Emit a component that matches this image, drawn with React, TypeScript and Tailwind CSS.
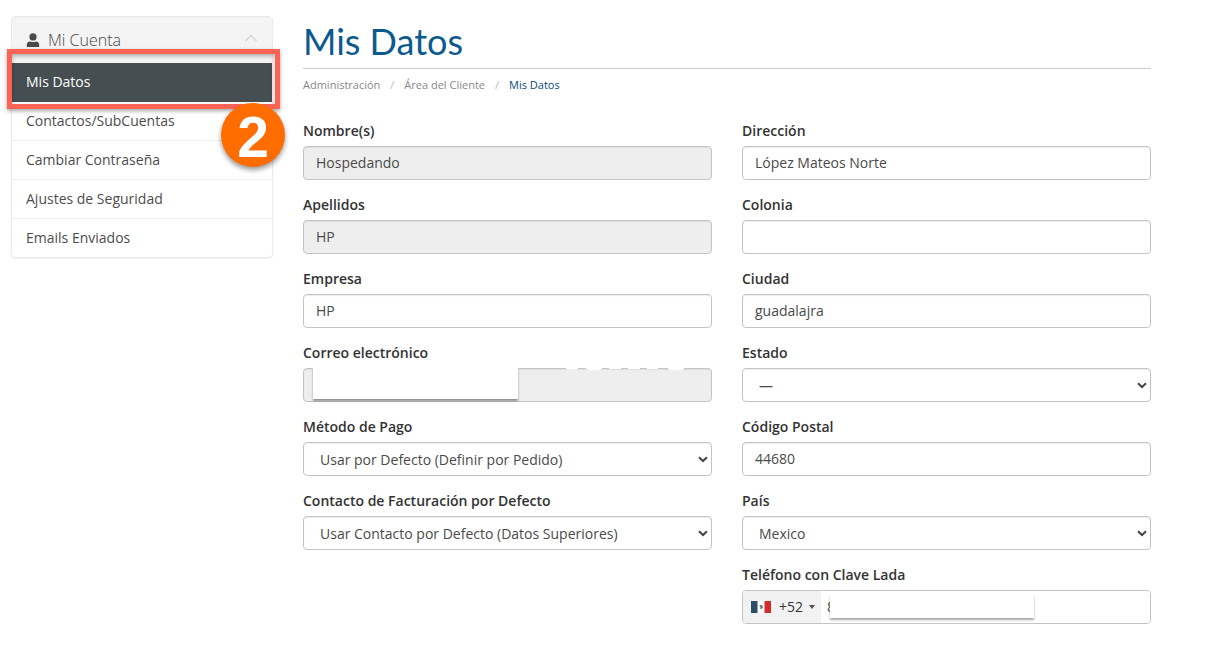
import React from 'react';

const menuItems = [
  'Mis Datos',
  'Contactos/SubCuentas',
  'Cambiar Contraseña',
  'Ajustes de Seguridad',
  'Emails Enviados',
];

const controlClass =
  'block h-[34px] w-full rounded border border-[#c4c4c4] px-3 text-sm text-[#4a4a4a] shadow-[inset_0_1px_1px_rgba(0,0,0,0.07)] outline-none';

function Field({ id, label, children }: { id: string; label: string; children: React.ReactNode }) {
  return (
    <div className="mb-[15px]">
      <label htmlFor={id} className="mb-[5px] block text-sm leading-5 font-semibold text-[#333]">
        {label}
      </label>
      {children}
    </div>
  );
}

function TextField({ id, label, value, locked }: { id: string; label: string; value: string; locked?: boolean }) {
  return (
    <Field id={id} label={label}>
      <input
        id={id}
        type="text"
        defaultValue={value}
        disabled={locked}
        className={`${controlClass} pb-0.5 ${locked ? 'bg-[#eee]' : 'bg-white'}`}
      />
    </Field>
  );
}

function SelectField({ id, label, value }: { id: string; label: string; value: string }) {
  return (
    <Field id={id} label={label}>
      <div className="relative">
        <select id={id} defaultValue={value} className={`${controlClass} appearance-none bg-white pt-0.5 pr-8 pl-4`}>
          <option>{value}</option>
        </select>
        <svg
          className="pointer-events-none absolute top-3.5 right-1 h-2 w-2.5"
          viewBox="0 0 10 8"
          fill="none"
          stroke="#444"
          strokeWidth="2"
          aria-hidden="true"
        >
          <path d="M1 1.2 L5 5 L9 1.2" />
        </svg>
      </div>
    </Field>
  );
}

function Sidebar() {
  return (
    <aside className="relative w-[262px] shrink-0">
      <div className="rounded border border-[#e9e9e9] bg-white shadow-[0_1px_1px_rgba(0,0,0,0.05)]">
        <h2 className="flex h-[46px] items-center bg-[#f4f4f4] px-3.5 text-base font-light text-[#444]">
          <svg className="mr-2 h-3.5 w-3.5" viewBox="0 0 14 14" fill="#4a4a4a" aria-hidden="true">
            <circle cx="7" cy="3.9" r="3.6" />
            <path d="M0.8 14 V11.8 Q0.8 8.6 4 8.4 Q7 9.6 10 8.4 Q13.2 8.6 13.2 11.8 V14 Z" />
          </svg>
          Mi Cuenta
          <svg className="mb-1 ml-auto h-2 w-3.5" viewBox="0 0 14 8" fill="none" stroke="#d5d5d5" strokeWidth="1.3" aria-hidden="true">
            <path d="M1.5 7 L7 1.5 L12.5 7" />
          </svg>
        </h2>
        <nav>
          {menuItems.map((item, index) => (
            <a
              key={item}
              href="#"
              className={`flex h-[39px] items-center border-b px-3.5 text-sm last:h-[38px] last:border-b-0 ${
                index === 0 ? 'border-[#454f51] bg-[#454f51] text-white' : 'border-[#eee] text-[#4d4d4d]'
              }`}
            >
              {item}
            </a>
          ))}
        </nav>
      </div>
      <div className="pointer-events-none absolute top-[33px] -right-[7px] -left-1 h-[60px] border-[5px] border-[#fb6455] shadow-[0_2px_4px_rgba(0,0,0,0.35),inset_0_2px_4px_rgba(0,0,0,0.3)]" />
      <div className="absolute top-[87px] -right-3 flex h-16 w-16 items-center justify-center rounded-full bg-[#ff6c00] pt-1 font-['Liberation_Sans',sans-serif] text-[57px] leading-none font-bold text-white shadow-[0_3px_5px_rgba(0,0,0,0.4)]">
        2
      </div>
    </aside>
  );
}

export default function App() {
  return (
    <div className="flex items-start gap-[30px] pt-4 pr-[61px] pb-4 pl-[11px] font-['Open_Sans',sans-serif] text-[#4a4a4a]">
      <Sidebar />
      <main className="min-w-0 grow">
        <h1 className="h-[53px] border-b border-[#ccc] font-['Lato',sans-serif] text-4xl leading-[50px] text-[#0b5a8f]">
          Mis Datos
        </h1>
        <nav aria-label="Ruta" className="flex items-center pt-2 pb-7 text-[11px] leading-4 text-[#888]">
          <a href="#">Administración</a>
          <span className="w-6 text-center text-[#bbb]">/</span>
          <a href="#">Área del Cliente</a>
          <span className="w-6 text-center text-[#bbb]">/</span>
          <span className="text-[#0a4a78]">Mis Datos</span>
        </nav>
        <form className="grid grid-cols-2 gap-x-[30px]">
          <div>
            <TextField id="nombre" label="Nombre(s)" value="Hospedando" locked />
            <TextField id="apellidos" label="Apellidos" value="HP" locked />
            <TextField id="empresa" label="Empresa" value="HP" />
            <Field id="correo" label="Correo electrónico">
              <div className="relative">
                <input id="correo" type="email" disabled className={`${controlClass} bg-[#eee]`} />
                <div className="absolute top-0 left-2.5 h-[31px] w-[205px] bg-white shadow-[0_2px_2px_rgba(0,0,0,0.4)]" />
                <svg className="absolute top-0 right-[26px] h-1 w-[120px]" viewBox="0 0 120 4" fill="#fff" aria-hidden="true">
                  <path d="M0 0 H12 V1 Q6 2 0 1 Z M20 0 H36 V1 Q28 4 20 1 Z M43 0 H55 V1 H43 Z M62 0 H74 V1 H62 Z M81 0 H92 V1 H81 Z M102 0 H118 V1 Q110 4 102 1 Z" />
                </svg>
              </div>
            </Field>
            <SelectField id="pago" label="Método de Pago" value="Usar por Defecto (Definir por Pedido)" />
            <SelectField
              id="facturacion"
              label="Contacto de Facturación por Defecto"
              value="Usar Contacto por Defecto (Datos Superiores)"
            />
          </div>
          <div>
            <TextField id="direccion" label="Dirección" value="López Mateos Norte" />
            <TextField id="colonia" label="Colonia" value="" />
            <TextField id="ciudad" label="Ciudad" value="guadalajra" />
            <SelectField id="estado" label="Estado" value="—" />
            <TextField id="postal" label="Código Postal" value="44680" />
            <SelectField id="pais" label="País" value="Mexico" />
            <Field id="telefono" label="Teléfono con Clave Lada">
              <div className="relative flex h-[34px] overflow-hidden rounded border border-[#c4c4c4] bg-white">
                <button type="button" className="flex w-[78px] shrink-0 items-center bg-[#f2f2f2] pl-2 text-sm text-[#333]">
                  <svg className="mr-2 h-3 w-5" viewBox="0 0 20 12" aria-hidden="true">
                    <path d="M0 0 H20 V12 H0 Z" fill="#fff" />
                    <path d="M0 0 H6.5 V12 H0 Z" fill="#2c4f66" />
                    <path d="M13.5 0 H20 V12 H13.5 Z" fill="#d52b2b" />
                    <path d="M8 5 L9.5 3.8 L11.5 4.6 L12 6.6 L10.5 8 L8.6 7.4 L9.6 6 Z" fill="#777" />
                  </svg>
                  +52
                  <svg className="ml-1.5 h-1 w-1.5" viewBox="0 0 6 4" fill="#555" aria-hidden="true">
                    <path d="M0 0 H6 L3 4 Z" />
                  </svg>
                </button>
                <input id="telefono" type="tel" defaultValue="8" className="min-w-0 grow bg-white pl-1.5 text-sm text-[#4a4a4a] outline-none" />
                <div className="absolute top-1 left-[87px] h-[23px] w-[204px] bg-white shadow-[0_2px_2px_rgba(0,0,0,0.35)]" />
              </div>
            </Field>
          </div>
        </form>
      </main>
    </div>
  );
}
